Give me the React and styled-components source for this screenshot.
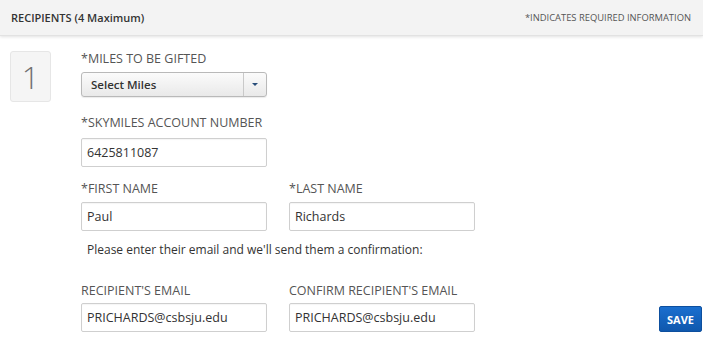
import React from "react";
import styled, { createGlobalStyle } from "styled-components";

const GlobalStyle = createGlobalStyle`
  html, body {
    margin: 0;
    padding: 0;
    background: #fff;
    font-family: "Open Sans", "Liberation Sans", sans-serif;
  }
`;

const Panel = styled.div`
  width: 703px;
  height: 355px;
  overflow: hidden;
  background: #fff;
`;

const Header = styled.div`
  height: 35px;
  display: flex;
  align-items: center;
  justify-content: space-between;
  padding: 0 12px 0 11px;
  background: #f3f3f3;
  border-bottom: 1px solid #e2e2e2;
  box-shadow: 0 1px 3px rgba(0, 0, 0, 0.12);
`;

const HeaderTitle = styled.span`
  font-size: 11px;
  font-weight: 600;
  color: #333;
`;

const HeaderNote = styled.span`
  font-size: 9.4px;
  color: #555;
`;

const Body = styled.div`
  display: flex;
  padding: 15px 1px 0 10px;
`;

const NumberBox = styled.div`
  width: 39px;
  height: 49px;
  margin-right: 30px;
  flex-shrink: 0;
  display: flex;
  align-items: center;
  justify-content: center;
  background: #f5f5f5;
  border: 1px solid #e6e6e6;
  border-radius: 3px;
  font-size: 31px;
  font-weight: 300;
  color: #707070;
`;

const Form = styled.div`
  flex: 1;
  display: flex;
  flex-direction: column;
`;

const Row = styled.div`
  display: flex;
  align-items: flex-end;
  gap: 22px;
  margin-top: ${(p) => p.$top || 0}px;
`;

const Field = styled.div`
  width: 186px;
  display: flex;
  flex-direction: column;
`;

const Label = styled.label`
  font-size: 12.5px;
  line-height: 16px;
  color: #555;
  white-space: nowrap;
  margin-bottom: ${(p) => p.$gap ?? 6}px;
`;

const Input = styled.div`
  box-sizing: border-box;
  height: 29px;
  padding: 0 5px;
  display: flex;
  align-items: center;
  border: 1px solid #cfcfcf;
  border-radius: 2px;
  box-shadow: inset 0 1px 1px rgba(0, 0, 0, 0.04);
  font-size: 12.5px;
  color: #333;
`;

const Select = styled.div`
  box-sizing: border-box;
  height: 25px;
  display: flex;
  border: 1px solid #b9b9b9;
  border-radius: 3px;
  background: linear-gradient(#fbfbfb, #e9e9e9);
  box-shadow: 0 1px 1px rgba(0, 0, 0, 0.08);
`;

const SelectText = styled.span`
  flex: 1;
  padding-left: 9px;
  display: flex;
  align-items: center;
  font-size: 11.5px;
  font-weight: 600;
  color: #333;
`;

const SelectArrow = styled.span`
  width: 22px;
  border-left: 1px solid #c9c9c9;
  display: flex;
  align-items: center;
  justify-content: center;

  &::after {
    content: "";
    border-left: 3px solid transparent;
    border-right: 3px solid transparent;
    border-top: 3px solid #274d7a;
  }
`;

const Note = styled.p`
  margin: 11px 0 0 6px;
  font-size: 12px;
  line-height: 16px;
  color: #333;
`;

const SaveButton = styled.button`
  margin-left: auto;
  width: 43px;
  height: 26px;
  padding: 0;
  border: 1px solid #0d4f9e;
  border-radius: 2px;
  background: linear-gradient(#1a6fcf, #0f58ad);
  color: #fff;
  font-family: "Open Sans", "Liberation Sans", sans-serif;
  font-size: 11px;
  font-weight: 700;
`;

export default function App() {
  return (
    <Panel>
      <GlobalStyle />
      <Header>
        <HeaderTitle>RECIPIENTS (4 Maximum)</HeaderTitle>
        <HeaderNote>*INDICATES REQUIRED INFORMATION</HeaderNote>
      </Header>
      <Body>
        <NumberBox>1</NumberBox>
        <Form>
          <Row>
            <Field>
              <Label $gap={5}>*MILES TO BE GIFTED</Label>
              <Select>
                <SelectText>Select Miles</SelectText>
                <SelectArrow />
              </Select>
            </Field>
          </Row>
          <Row $top={18}>
            <Field>
              <Label $gap={7}>*SKYMILES ACCOUNT NUMBER</Label>
              <Input>6425811087</Input>
            </Field>
          </Row>
          <Row $top={14}>
            <Field>
              <Label $gap={5}>*FIRST NAME</Label>
              <Input>Paul</Input>
            </Field>
            <Field>
              <Label $gap={5}>*LAST NAME</Label>
              <Input>Richards</Input>
            </Field>
          </Row>
          <Note>Please enter their email and we'll send them a confirmation:</Note>
          <Row $top={25}>
            <Field>
              <Label $gap={4}>RECIPIENT'S EMAIL</Label>
              <Input>PRICHARDS@csbsju.edu</Input>
            </Field>
            <Field>
              <Label $gap={4}>CONFIRM RECIPIENT'S EMAIL</Label>
              <Input>PRICHARDS@csbsju.edu</Input>
            </Field>
            <SaveButton>SAVE</SaveButton>
          </Row>
        </Form>
      </Body>
    </Panel>
  );
}
